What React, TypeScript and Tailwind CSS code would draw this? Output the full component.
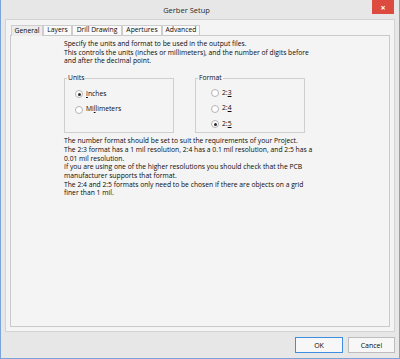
import type { ReactNode } from 'react'

const tabs = [
  { label: 'General', w: 'w-[32px]' },
  { label: 'Layers', w: 'w-[29px]' },
  { label: 'Drill Drawing', w: 'w-[50px]' },
  { label: 'Apertures', w: 'w-[40px]' },
  { label: 'Advanced', w: 'w-[38px]' },
]

function Radio({ checked, children }: { checked?: boolean; children: ReactNode }) {
  return (
    <div className="flex h-[8px] items-center gap-[3px]">
      <span className="grid size-[8px] place-items-center rounded-full border border-[#b4b4b4] bg-white">
        {checked && <span className="size-[3px] rounded-full bg-[#2a2a2a]" />}
      </span>
      <span>{children}</span>
    </div>
  )
}

function GroupBox({ title, children }: { title: string; children: ReactNode }) {
  return (
    <fieldset className="h-[59px] w-[110px] border border-[#cfcfcf] px-0">
      <legend className="ml-[2px] px-[1px] leading-[8px]">{title}</legend>
      {children}
    </fieldset>
  )
}

export default function App() {
  return (
    <div
      className="flex h-[359px] w-[400px] flex-col border-x border-b border-[#7aa3d8] bg-[#e7e7e7] text-[6.75px] leading-[8.7px] text-[#0a0a0a]"
      style={{ fontFamily: '"Segoe UI", "Open Sans", "Noto Sans", sans-serif' }}
    >
      {/* title bar */}
      <div className="flex h-[19px] shrink-0 pr-[5px]">
        <div className="flex-1 pt-[5px] text-center text-[7.5px] leading-[10px] text-[#2b2b2b]">Gerber Setup</div>
        <div className="grid h-[14px] w-[22px] place-items-center bg-[#dc4a40] text-[9px] font-bold leading-none text-white">
          ×
        </div>
      </div>

      {/* panel */}
      <div className="mx-[4px] flex h-[313px] shrink-0 flex-col border border-[#d3d3d3] bg-[#f4f4f4] px-[4px] pb-[4px] pt-[5px]">
        <div className="flex h-[10px] shrink-0 pl-[1px]">
          {tabs.map((t, i) => (
            <div
              key={t.label}
              className={`${t.w} flex items-center justify-center border-x border-t border-[#cdcdcd] leading-none ${
                i === 0 ? 'relative z-10 -mb-[1px] h-[11px] bg-[#ececec]' : 'h-[10px] bg-[#fafafa]'
              }`}
            >
              {t.label}
            </div>
          ))}
        </div>
        <div className="flex flex-1 flex-col border border-[#c9c9c9] bg-[#f4f4f4] pl-[53px] pt-[4px]">
          <div className="whitespace-nowrap">
            <div>Specify the units and format to be used in the output files.</div>
            <div>This controls the units (inches or millimeters), and the number of digits before</div>
            <div>and after the decimal point.</div>
          </div>

          <div className="mt-[8px] flex gap-[21px]">
            <GroupBox title="Units">
              <div className="flex flex-col gap-[7.5px] pl-[10px] pt-[8px]">
                <Radio checked>
                  <span className="underline">I</span>nches
                </Radio>
                <Radio>
                  Mi<span className="underline">l</span>limeters
                </Radio>
              </div>
            </GroupBox>
            <GroupBox title="Format">
              <div className="flex flex-col gap-[7.5px] pl-[15px] pt-[7px]">
                <Radio>
                  2:<span className="underline">3</span>
                </Radio>
                <Radio>
                  2:<span className="underline">4</span>
                </Radio>
                <Radio checked>
                  2:<span className="underline">5</span>
                </Radio>
              </div>
            </GroupBox>
          </div>

          <div className="mt-[4px] whitespace-nowrap">
            <div>The number format should be set to suit the requirements of your Project.</div>
            <div>The 2:3 format has a 1 mil resolution, 2:4 has a 0.1 mil resolution, and 2:5 has a</div>
            <div>0.01 mil resolution.</div>
            <div>If you are using one of the higher resolutions you should check that the PCB</div>
            <div>manufacturer supports that format.</div>
            <div>The 2:4 and 2:5 formats only need to be chosen if there are objects on a grid</div>
            <div>finer than 1 mil.</div>
          </div>
        </div>
      </div>

      {/* buttons */}
      <div className="flex justify-end gap-[5px] pr-[4px] pt-[5px]">
        <button className="h-[16px] w-[48px] border border-[#3d8ee0] bg-[#f7f7f7] text-[7px] leading-none">OK</button>
        <button className="h-[16px] w-[47px] border border-[#bdbdbd] bg-[#f7f7f7] text-[7px] leading-none">Cancel</button>
      </div>
    </div>
  )
}
